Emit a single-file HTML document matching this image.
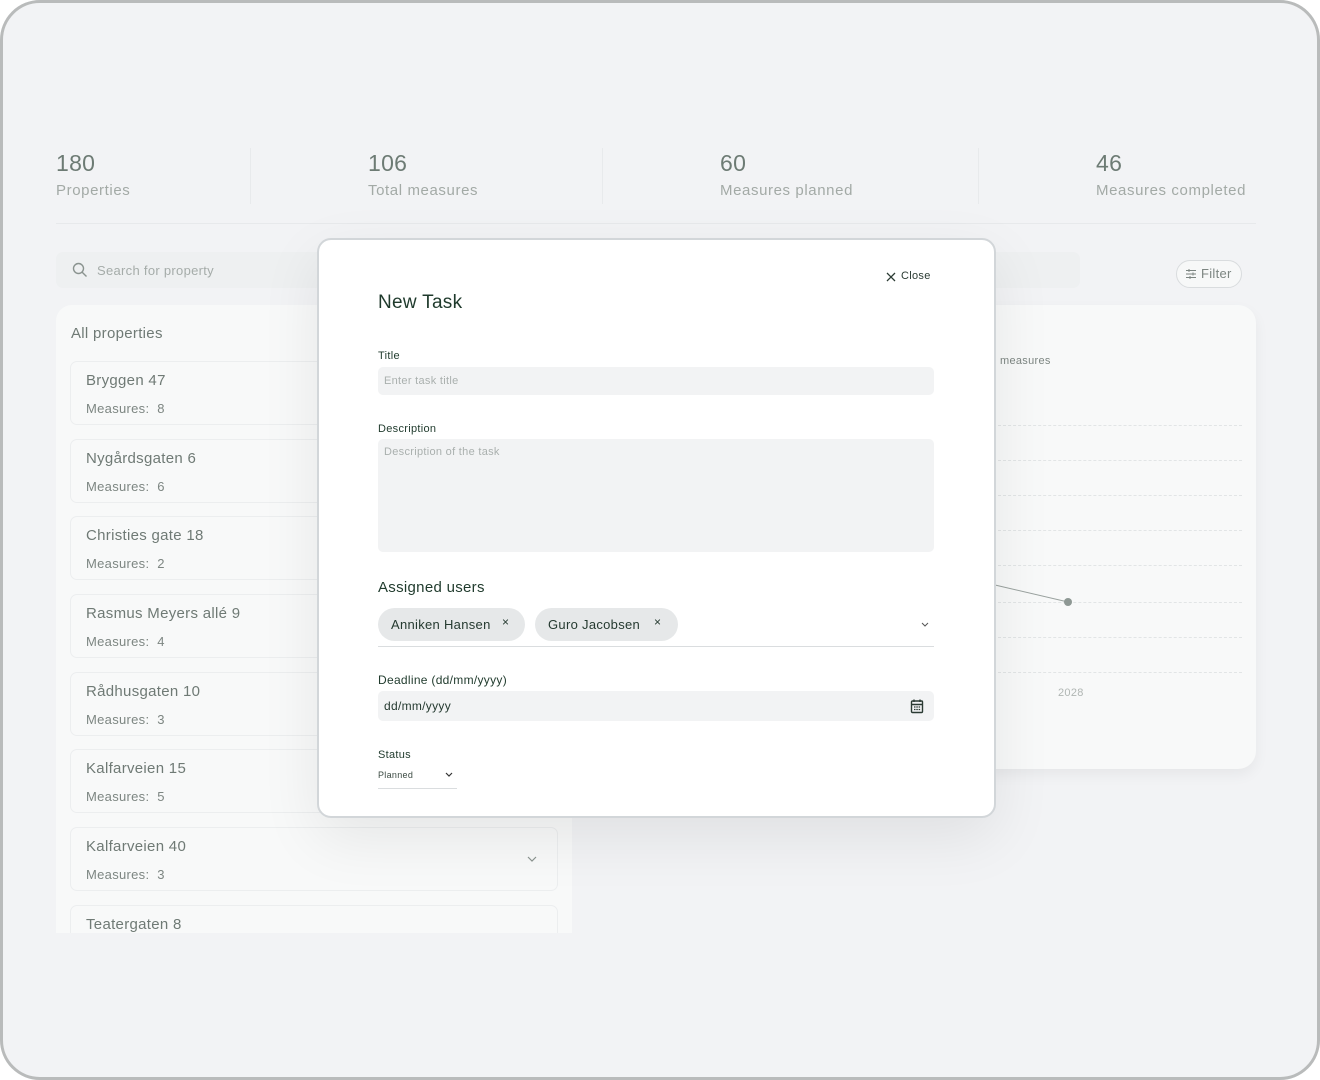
<!DOCTYPE html>
<html><head><meta charset="utf-8"><style>
*{box-sizing:border-box;margin:0;padding:0}
body{width:1320px;height:1080px;background:#fff;font-family:"Liberation Sans",sans-serif;overflow:hidden;position:relative;letter-spacing:0.3px}
.frame{position:absolute;left:0;top:0;width:1320px;height:1080px;border-radius:40px;background:#f2f3f5;overflow:hidden}
.bord{position:absolute;left:0;top:0;width:1320px;height:1080px;border:3px solid #b9bbbb;border-radius:40px;pointer-events:none}
.a{position:absolute}
.num{font-size:23px;color:#6d7b74}
.lbl{font-size:15px;color:#a3aaa6;letter-spacing:0.6px}
.vd{position:absolute;top:148px;width:1px;height:56px;background:#e8eaec}
.card{position:absolute;left:70px;width:488px;height:64px;border:1px solid #eceeef;border-radius:7px;background:#f8f9f9}
.card .t{position:absolute;left:15px;top:10px;font-size:15px;color:#6f7a75}
.card .m{position:absolute;left:15px;top:39px;font-size:13px;color:#7d8682}
.dash{position:absolute;left:998px;width:244px;border-top:1px dashed #e2e5e6}
.modal{position:absolute;left:317px;top:238px;width:679px;height:580px;background:#fff;border:2px solid #d2d6d9;border-radius:14px;box-shadow:0 20px 60px rgba(0,0,0,.08)}
.ml{position:absolute;font-size:11px;color:#1f3a2c}
.inp{position:absolute;left:59px;width:556px;background:#f2f3f4;border-radius:5px;font-size:11px;color:#aab0ae;padding-left:6px}
.chip{position:absolute;top:368px;height:33px;border-radius:17px;background:#e6e8e9;font-size:13px;color:#253a30;line-height:33px;padding-left:13px}
</style></head><body>
<div class="frame">
 <div class="a num" style="left:56px;top:150px">180</div><div class="a lbl" style="left:56px;top:182px">Properties</div>
 <div class="vd" style="left:250px"></div>
 <div class="a num" style="left:368px;top:150px">106</div><div class="a lbl" style="left:368px;top:182px">Total measures</div>
 <div class="vd" style="left:602px"></div>
 <div class="a num" style="left:720px;top:150px">60</div><div class="a lbl" style="left:720px;top:182px">Measures planned</div>
 <div class="vd" style="left:978px"></div>
 <div class="a num" style="left:1096px;top:150px">46</div><div class="a lbl" style="left:1096px;top:182px">Measures completed</div>
 <div class="a" style="left:56px;top:223px;width:1200px;height:1px;background:#e7e9eb"></div>

 <div class="a" style="left:56px;top:252px;width:1024px;height:36px;background:#eef0f1;border-radius:7px"></div>
 <svg class="a" style="left:72px;top:262px" width="16" height="16" viewBox="0 0 16 16"><circle cx="6.5" cy="6.5" r="5" fill="none" stroke="#8a938f" stroke-width="1.4"/><path d="M10.2 10.2L14.5 14.5" stroke="#8a938f" stroke-width="1.4"/></svg>
 <div class="a" style="left:97px;top:263px;font-size:13px;color:#a5aca9">Search for property</div>
 <div class="a" style="left:1176px;top:260px;width:66px;height:28px;border:1px solid #d9dcde;border-radius:14px;background:#f7f8f8;font-size:13px;color:#7c8581;line-height:26px;padding-left:24px">Filter</div>
 <svg class="a" style="left:1185px;top:268px" width="12" height="12" viewBox="0 0 12 12" stroke="#7c8581" stroke-width="1"><path d="M1 2.5h10M1 6h10M1 9.5h10M4 1v3M8 4.5v3M5 8v3"/></svg>

 <div class="a" style="left:56px;top:305px;width:516px;height:628px;background:#f8f9f9;border-radius:16px 16px 0 0;overflow:hidden">
  <div class="a" style="left:15px;top:20px;font-size:15px;color:#6f7a75">All properties</div>
 </div>
 <div class="card" style="top:361px"><div class="t">Bryggen 47</div><div class="m">Measures:&nbsp; 8</div></div>
 <div class="card" style="top:439px"><div class="t">Nygårdsgaten 6</div><div class="m">Measures:&nbsp; 6</div></div>
 <div class="card" style="top:516px"><div class="t">Christies gate 18</div><div class="m">Measures:&nbsp; 2</div></div>
 <div class="card" style="top:594px"><div class="t">Rasmus Meyers allé 9</div><div class="m">Measures:&nbsp; 4</div></div>
 <div class="card" style="top:672px"><div class="t">Rådhusgaten 10</div><div class="m">Measures:&nbsp; 3</div></div>
 <div class="card" style="top:749px"><div class="t">Kalfarveien 15</div><div class="m">Measures:&nbsp; 5</div></div>
 <div class="card" style="top:827px"><div class="t">Kalfarveien 40</div><div class="m">Measures:&nbsp; 3</div>
  <svg class="a" style="left:455px;top:27px" width="12" height="8" viewBox="0 0 12 8"><path d="M2 2l4 4 4-4" fill="none" stroke="#8a938f" stroke-width="1.2"/></svg></div>
 <div class="a" style="left:56px;top:895px;width:516px;height:38px;overflow:hidden"><div class="card" style="top:10px;left:14px"><div class="t">Teatergaten 8</div></div></div>

 <div class="a" style="left:900px;top:305px;width:356px;height:464px;background:#f8f9f9;border-radius:18px;box-shadow:0 6px 14px rgba(0,0,0,.05)"></div>
 <div class="a" style="left:1000px;top:355px;font-size:11px;color:#7d8682">measures</div>
 <div class="dash" style="top:425px"></div><div class="dash" style="top:460px"></div><div class="dash" style="top:495px"></div><div class="dash" style="top:530px"></div><div class="dash" style="top:565px"></div><div class="dash" style="top:602px"></div><div class="dash" style="top:637px"></div><div class="dash" style="top:672px"></div>
 <svg class="a" style="left:990px;top:580px" width="90" height="30"><path d="M5 5L78 22" stroke="#9aa29f" stroke-width="1"/><circle cx="78" cy="22" r="4" fill="#8e9894"/></svg>
 <div class="a" style="left:1058px;top:687px;font-size:11px;color:#b0b6b3">2028</div>

 <div class="modal">
  <div class="a" style="left:582px;top:30px;font-size:11px;color:#2b3b33">Close</div>
  <svg class="a" style="left:567px;top:32px" width="10" height="10" viewBox="0 0 10 10"><path d="M1 1l8 8M9 1L1 9" stroke="#2b3b33" stroke-width="1.3"/></svg>
  <div class="a" style="left:59px;top:52px;font-size:19px;color:#1f3a2c">New Task</div>
  <div class="ml" style="left:59px;top:110px">Title</div>
  <div class="inp" style="top:127px;height:28px;line-height:28px">Enter task title</div>
  <div class="ml" style="left:59px;top:183px">Description</div>
  <div class="inp" style="top:199px;height:113px;padding-top:7px">Description of the task</div>
  <div class="a" style="left:59px;top:339px;font-size:15px;color:#1f3a2c">Assigned users</div>
  <div class="chip" style="left:59px;width:147px">Anniken Hansen <span style="position:absolute;left:124px;top:-2px;font-size:12px">×</span></div>
  <div class="chip" style="left:216px;width:143px">Guro Jacobsen <span style="position:absolute;left:119px;top:-2px;font-size:12px">×</span></div>
  <svg class="a" style="left:601px;top:381px" width="10" height="7" viewBox="0 0 10 7"><path d="M2 2l3 3 3-3" fill="none" stroke="#555" stroke-width="1"/></svg>
  <div class="a" style="left:59px;top:406px;width:556px;height:1px;background:#dadddf"></div>
  <div class="ml" style="left:59px;top:433px;font-size:12px">Deadline (dd/mm/yyyy)</div>
  <div class="inp" style="top:451px;height:30px;line-height:30px;color:#253a30;font-size:12px">dd/mm/yyyy</div>
  <svg class="a" style="left:591px;top:458px" width="14" height="16" viewBox="0 0 14 16"><rect x="1.5" y="3" width="11" height="11.5" rx="1" fill="none" stroke="#2b3b33" stroke-width="1.4"/><path d="M1.5 6.5h11M4 1.5v2.5M10 1.5v2.5" stroke="#2b3b33" stroke-width="1.4"/><path d="M4 9h1.5M6.3 9h1.5M8.6 9h1.5M4 11.5h1.5M6.3 11.5h1.5M8.6 11.5h1.5" stroke="#2b3b33" stroke-width="1.2"/></svg>
  <div class="ml" style="left:59px;top:509px">Status</div>
  <div class="a" style="left:59px;top:530px;font-size:9px;color:#3b4a42">Planned</div>
  <svg class="a" style="left:125px;top:531px" width="10" height="7" viewBox="0 0 10 7"><path d="M2 2l3 3 3-3" fill="none" stroke="#333" stroke-width="1.2"/></svg>
  <div class="a" style="left:59px;top:548px;width:79px;height:1px;background:#dadddf"></div>
 </div>
</div>
<div class="bord"></div>
</body></html>
